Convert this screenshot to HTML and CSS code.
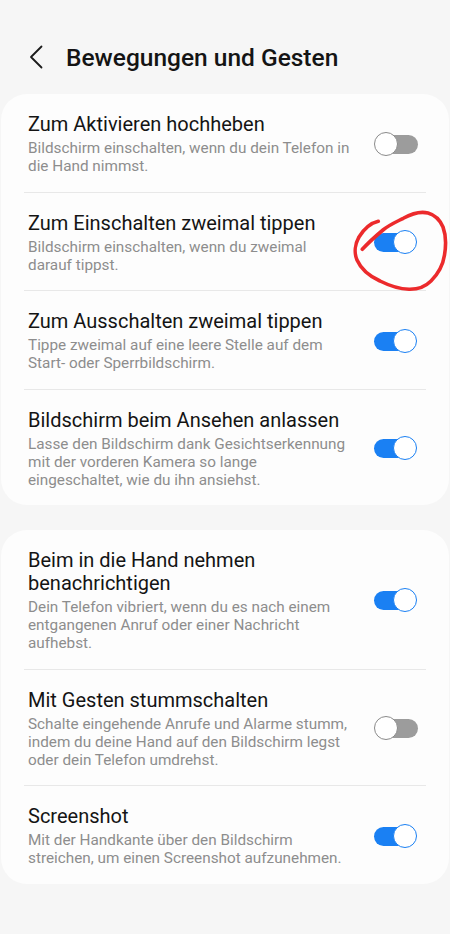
FILE: index.html
```html
<!DOCTYPE html>
<html lang="de">
<head>
    <meta charset="UTF-8">
    <meta name="viewport" content="width=device-width, initial-scale=1.0">
    <title>Bewegungen und Gesten</title>
    <link rel="stylesheet" href="styles.css">
</head>
<body>
    <div class="header">
        <svg class="back" width="24" height="24" viewBox="0 0 24 24">
            <path d="M17.5 1.5 L7 12 L17.5 22.5" fill="none" stroke="#1b1b1b" stroke-width="1.8" stroke-linecap="round" stroke-linejoin="round"/>
        </svg>
        <h1>Bewegungen und Gesten</h1>
    </div>

    <div class="card">
        <div class="row">
            <div class="txt">
                <div class="ttl">Zum Aktivieren hochheben</div>
                <div class="sub">Bildschirm einschalten, wenn du dein Telefon in die Hand nimmst.</div>
            </div>
            <div class="toggle"><span class="track"></span><span class="knob"></span></div>
        </div>
        <div class="row">
            <div class="txt">
                <div class="ttl">Zum Einschalten zweimal tippen</div>
                <div class="sub">Bildschirm einschalten, wenn du zweimal darauf tippst.</div>
            </div>
            <div class="toggle on">
                <span class="track"></span><span class="knob"></span>
                <!-- hand drawn marker from the screenshot -->
                <svg class="scribble" width="105" height="90" viewBox="345 205 105 90">
                    <path d="M378.3 220.3 C371 222 364 228 359 236 C355 243 354 252 357 259 C361 268 369 275 380 280 C390 285 400 288 409 288.3 C417 288.5 425 286 431 280 C438 273 443 264 444.5 254 C446 245 446 234 443 226 C440 219 435 214 428 212 C420 210 411 213 403.3 217.3 C396 221 389 224 383 229 C377 234 370 240 362.3 248.3" fill="none" stroke="#ec2a2c" stroke-width="3.6" stroke-linecap="round" stroke-linejoin="round"/>
                </svg>
            </div>
        </div>
        <div class="row">
            <div class="txt">
                <div class="ttl">Zum Ausschalten zweimal tippen</div>
                <div class="sub">Tippe zweimal auf eine leere Stelle auf dem Start- oder Sperrbildschirm.</div>
            </div>
            <div class="toggle on"><span class="track"></span><span class="knob"></span></div>
        </div>
        <div class="row">
            <div class="txt">
                <div class="ttl">Bildschirm beim Ansehen anlassen</div>
                <div class="sub">Lasse den Bildschirm dank Gesichtserkennung mit der vorderen Kamera so lange eingeschaltet, wie du ihn ansiehst.</div>
            </div>
            <div class="toggle on"><span class="track"></span><span class="knob"></span></div>
        </div>
    </div>

    <div class="card">
        <div class="row">
            <div class="txt">
                <div class="ttl">Beim in die Hand nehmen benachrichtigen</div>
                <div class="sub">Dein Telefon vibriert, wenn du es nach einem entgangenen Anruf oder einer Nachricht aufhebst.</div>
            </div>
            <div class="toggle on"><span class="track"></span><span class="knob"></span></div>
        </div>
        <div class="row">
            <div class="txt">
                <div class="ttl">Mit Gesten stummschalten</div>
                <div class="sub">Schalte eingehende Anrufe und Alarme stumm, indem du deine Hand auf den Bildschirm legst oder dein Telefon umdrehst.</div>
            </div>
            <div class="toggle"><span class="track"></span><span class="knob"></span></div>
        </div>
        <div class="row">
            <div class="txt">
                <div class="ttl">Screenshot</div>
                <div class="sub">Mit der Handkante über den Bildschirm streichen, um einen Screenshot aufzunehmen.</div>
            </div>
            <div class="toggle on"><span class="track"></span><span class="knob"></span></div>
        </div>
    </div>
</body>
</html>
```

FILE: styles.css
```css
body {
    margin: 0;
    background: #f6f6f6;
    font-family: Roboto, "Noto Sans", sans-serif;
    color: #141414;
}
.header {
    display: flex;
    align-items: center;
    height: 46px;
    padding: 34px 0 0 24px;
    margin-bottom: 14px;
}
.back {
    display: block;
    margin-right: 18px;
}
h1 {
    margin: 0;
    font-size: 24.5px;
    font-weight: 500;
}
.card {
    background: #fdfdfd;
    border-radius: 26px;
    margin: 0 1px 25px;
}
.row {
    display: flex;
    align-items: center;
    margin: 0 23px;
    padding: 19px 8px 16.5px 4px;
}
.row + .row {
    border-top: 1px solid #e8e8e8;
}
.txt {
    flex: 1;
    padding-right: 21px;
}
.ttl {
    font-size: 20px;
    line-height: 23px;
}
.sub {
    margin-top: 3px;
    font-size: 15.3px;
    line-height: 18px;
    color: #8d8d8d;
}
.toggle {
    position: relative;
    width: 44px;
    height: 25px;
    flex-shrink: 0;
}
.track {
    position: absolute;
    left: 2px;
    top: 3px;
    width: 42px;
    height: 19px;
    border-radius: 10px;
    background: #9c9c9c;
}
.knob {
    position: absolute;
    left: 0;
    top: 0;
    width: 22px;
    height: 22px;
    border-radius: 50%;
    background: #fff;
    border: 1.5px solid #8a8a8a;
}
.on .track {
    left: 0;
    background: #1a80f3;
}
.on .knob {
    left: 19px;
    border-color: #1a80f3;
}
.scribble {
    position: absolute;
    left: -29px;
    top: -24px;
    pointer-events: none;
}
```
